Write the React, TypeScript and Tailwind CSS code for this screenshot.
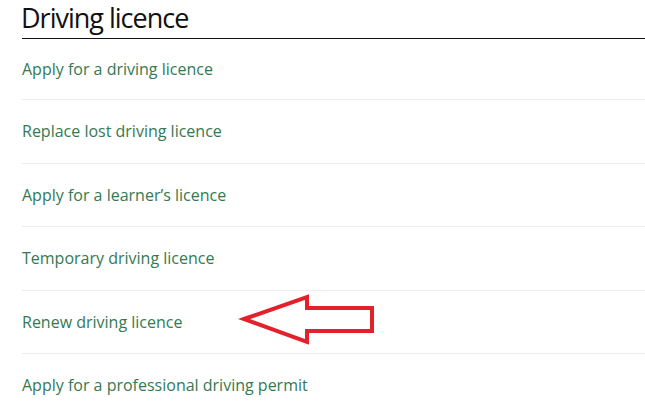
import React from 'react';

const links = [
    'Apply for a driving licence',
    'Replace lost driving licence',
    'Apply for a learner\u2019s licence',
    'Temporary driving licence',
    'Renew driving licence',
    'Apply for a professional driving permit',
];

const Arrow = () => (
    <svg className="absolute left-[238px] top-[290px]" width="142" height="60" viewBox="238 290 142 60">
        <polygon
            points="244,319 307,297 307,308 372,308 372,331 307,331 307,342"
            fill="none"
            stroke="#e3212b"
            strokeWidth="4"
            strokeLinejoin="miter"
        />
    </svg>
);

export default function App() {
    return (
        <div className="relative w-[645px] h-[404px] overflow-hidden bg-white pl-[22px] font-['Open_Sans',sans-serif]">
            <div className="h-[39px] border-b border-[#111] flex items-end">
                <h1 className="text-[27px] leading-[38px] tracking-[-1px] text-[#111] mb-[1px] -ml-[1px]">Driving licence</h1>
            </div>
            {links.map((label, index) => (
                <div
                    key={index}
                    className={`flex items-center border-b border-[#ececec] text-[16px] text-[#347a52] ${index === 0 ? 'h-[61px]' : 'h-[63.5px]'}`}
                >
                    <a href="#">{label}</a>
                </div>
            ))}
            <Arrow />
        </div>
    );
}
